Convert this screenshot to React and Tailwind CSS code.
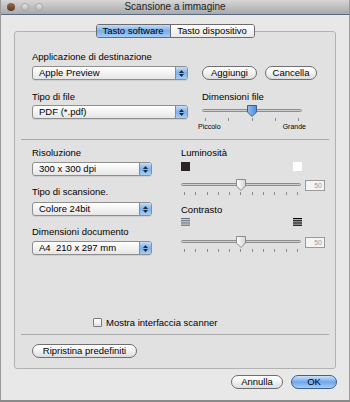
import React from "react";

const font = { fontFamily: '"Liberation Sans", Arial, sans-serif' };

function Popup({ label, width }) {
	return (
		<div
			className={`flex h-[14px] ${width} items-stretch rounded-[3px] border border-[#8e8e8e] bg-gradient-to-b from-white to-[#e6e6e6] shadow-[0_1px_0_rgba(0,0,0,0.08)]`}
		>
			<div className="flex flex-1 items-center whitespace-pre pl-[6px] text-[9.5px] leading-none text-black">
				{label}
			</div>
			<div className="flex w-[12px] flex-col items-center justify-center gap-[1px] rounded-r-[2px] border-l border-[#7a8fb0] bg-gradient-to-b from-[#c8ddf5] via-[#7db0ea] to-[#a9cdf3]">
				<svg width="5" height="3" viewBox="0 0 5 3">
					<path d="M0 3 L2.5 0 L5 3 Z" fill="#1a2b44" />
				</svg>
				<svg width="5" height="3" viewBox="0 0 5 3">
					<path d="M0 0 L2.5 3 L5 0 Z" fill="#1a2b44" />
				</svg>
			</div>
		</div>
	);
}

function Button({ children, className = "", primary = false }) {
	return (
		<div
			className={`flex h-[14px] items-center justify-center rounded-full border text-[9.5px] leading-none text-black ${
				primary
					? "border-[#3f5f8f] bg-gradient-to-b from-[#cfe3fa] via-[#6fa8ea] to-[#a6cdf5]"
					: "border-[#6f6f6f] bg-gradient-to-b from-white via-[#f2f2f2] to-[#dcdcdc]"
			} ${className}`}
		>
			{children}
		</div>
	);
}

function Knob({ blue = false }) {
	return (
		<svg width="12" height="12" viewBox="0 0 12 12" className="-ml-[6px] -mt-[5px]">
			<defs>
				<linearGradient id={blue ? "kb" : "kw"} x1="0" y1="0" x2="1" y2="0">
					<stop offset="0" stopColor={blue ? "#8fbdf0" : "#ffffff"} />
					<stop offset="1" stopColor={blue ? "#4d8fdc" : "#d4d4d4"} />
				</linearGradient>
			</defs>
			<path
				d="M1.5 0.5 H10.5 V7 L6 11.5 L1.5 7 Z"
				fill={`url(#${blue ? "kb" : "kw"})`}
				stroke={blue ? "#3d5e8c" : "#8a8a8a"}
				strokeWidth="1"
			/>
		</svg>
	);
}

function Slider({ width, pos, blue = false, ticks }) {
	return (
		<div className={`flex ${width} flex-col`}>
			<div className="relative h-[3px] w-full rounded-full border border-[#8c8c8c] bg-gradient-to-b from-[#b5b5b5] to-[#e8e8e8]">
				<div className="absolute top-0" style={{ left: `${pos}%` }}>
					<Knob blue={blue} />
				</div>
			</div>
			<div className="mt-[6px] flex justify-between px-[3px]">
				{Array.from({ length: ticks }).map((_, i) => (
					<div key={i} className="h-[3px] w-[1px] bg-[#8a8a8a]" />
				))}
			</div>
		</div>
	);
}

function Field() {
	return (
		<div className="flex h-[11px] w-[20px] items-center justify-end border border-[#9a9a9a] bg-[#f4f4f4] pr-[2px] text-[7px] leading-none text-[#9a9a9a]">
			50
		</div>
	);
}

function Stripes({ dark }) {
	const c = dark ? "#000000" : "#66717f";
	return (
		<svg width="9" height="8" viewBox="0 0 9 8">
			<rect x="0" y="0" width="9" height="1.2" fill={c} />
			<rect x="0" y="2.2" width="9" height="1.2" fill={c} />
			<rect x="0" y="4.4" width="9" height="1.2" fill={c} />
			<rect x="0" y="6.6" width="9" height="1.2" fill={c} />
		</svg>
	);
}

export default function App() {
	return (
		<div
			style={font}
			className="flex h-[402px] w-[350px] flex-col overflow-hidden bg-white"
		>
			<div className="flex h-[400px] flex-col border-x border-[#9a9a9a] bg-[#e8e8e8]">
				{/* title bar */}
				<div className="relative flex h-[14px] items-center justify-center bg-gradient-to-b from-[#d6d6d6] to-[#a9a9a9]">
					<div className="absolute left-[6px] top-[3px] flex gap-[6px]">
						<div className="h-[8px] w-[8px] rounded-full bg-gradient-to-b from-[#9a6a4a] to-[#5a3a2a]" />
						<div className="h-[8px] w-[8px] rounded-full border border-[#a5a5a5] bg-gradient-to-b from-[#e6e6e6] to-[#bdbdbd]" />
						<div className="h-[8px] w-[8px] rounded-full border border-[#a5a5a5] bg-gradient-to-b from-[#e6e6e6] to-[#bdbdbd]" />
					</div>
					<span className="text-[10px] leading-none text-[#222]">Scansione a immagine</span>
				</div>
				<div className="h-[1px] bg-[#5a6a84]" />

				{/* group box */}
				<div className="mx-[13px] mt-[16px] flex h-[338px] flex-col rounded-[3px] border border-[#b2b2b2] bg-[#e1e1e1]">
					<div className="-mt-[8px] flex justify-center">
						<div className="flex h-[14px] overflow-hidden rounded-[3px] border border-[#6c6c6c] text-[9.5px] leading-none">
							<div className="flex w-[74px] items-center justify-center border-r border-[#6c6c6c] bg-gradient-to-b from-[#c5dcf6] via-[#75aeea] to-[#a8cef4] text-black">
								Tasto software
							</div>
							<div className="flex w-[83px] items-center justify-center bg-gradient-to-b from-white to-[#e8e8e8] text-black">
								Tasto dispositivo
							</div>
						</div>
					</div>

					{/* section 1 */}
					<div className="mt-[14px] pl-[17px] text-[9.5px] leading-[10px] text-black">
						Applicazione di destinazione
					</div>
					<div className="mt-[4px] flex items-center pl-[17px]">
						<Popup label="Apple Preview" width="w-[156px]" />
						<Button className="ml-[14px] w-[55px]">Aggiungi</Button>
						<Button className="ml-[8px] w-[52px]">Cancella</Button>
					</div>
					<div className="mt-[12px] flex pl-[17px]">
						<div className="flex w-[156px] flex-col">
							<div className="text-[9.5px] leading-[10px] text-black">Tipo di file</div>
							<div className="mt-[3px]">
								<Popup label="PDF (*.pdf)" width="w-[156px]" />
							</div>
						</div>
						<div className="ml-[14px] flex w-[100px] flex-col">
							<div className="text-[9.5px] leading-[10px] text-black">Dimensioni file</div>
							<div className="mt-[7px]">
								<Slider width="w-[100px]" pos={50} blue ticks={5} />
							</div>
							<div className="-mx-[4px] mt-[2px] flex justify-between text-[7px] leading-[8px] text-black">
								<span>Piccolo</span>
								<span>Grande</span>
							</div>
						</div>
					</div>

					<div className="mx-[6px] mt-[8px] h-[1px] bg-[#a9a9a9]" />

					{/* section 2 */}
					<div className="mt-[8px] flex pl-[17px]">
						<div className="flex w-[120px] flex-col text-[9.5px] leading-[10px] text-black">
							<div>Risoluzione</div>
							<div className="mt-[4px]">
								<Popup label="300 x 300 dpi" width="w-[120px]" />
							</div>
							<div className="mt-[11px]">Tipo di scansione.</div>
							<div className="mt-[5px]">
								<Popup label="Colore 24bit" width="w-[120px]" />
							</div>
							<div className="mt-[11px]">Dimensioni documento</div>
							<div className="mt-[4px]">
								<Popup label="A4  210 x 297 mm" width="w-[120px]" />
							</div>
						</div>
						<div className="ml-[29px] flex w-[145px] flex-col text-[9.5px] leading-[10px] text-black">
							<div>Luminosità</div>
							<div className="mt-[4px] flex w-[121px] justify-between">
								<div className="h-[9px] w-[9px] bg-[#2b2226]" />
								<div className="h-[9px] w-[9px] bg-white" />
							</div>
							<div className="mt-[5px] flex items-center">
								<div className="mt-[7px]">
									<Slider width="w-[120px]" pos={50} ticks={11} />
								</div>
								<div className="ml-[4px]">
									<Field />
								</div>
							</div>
							<div className="mt-[10px]">Contrasto</div>
							<div className="mt-[3px] flex w-[121px] justify-between">
								<Stripes />
								<Stripes dark />
							</div>
							<div className="mt-[7px] flex items-center">
								<div className="mt-[7px]">
									<Slider width="w-[120px]" pos={50} ticks={11} />
								</div>
								<div className="ml-[4px]">
									<Field />
								</div>
							</div>
						</div>
					</div>

					<div className="flex-1" />

					<div className="flex items-center pl-[78px]">
						<div className="h-[9px] w-[9px] rounded-[1px] border border-[#7a7a7a] bg-gradient-to-b from-white to-[#e4e4e4]" />
						<span className="ml-[4px] text-[9.5px] leading-none text-black">
							Mostra interfaccia scanner
						</span>
					</div>
					<div className="mx-[6px] mt-[7px] h-[1px] bg-[#a9a9a9]" />
					<div className="mt-[9px] mb-[10px] pl-[17px]">
						<Button className="w-[105px]">Ripristina predefiniti</Button>
					</div>
				</div>

				<div className="mt-[6px] flex justify-end pr-[12px]">
					<Button className="w-[52px]">Annulla</Button>
					<Button className="ml-[8px] w-[46px]" primary>
						OK
					</Button>
				</div>
				<div className="flex-1" />
			</div>
			<div className="h-[2px] bg-[#8a8a8a]" />
		</div>
	);
}
